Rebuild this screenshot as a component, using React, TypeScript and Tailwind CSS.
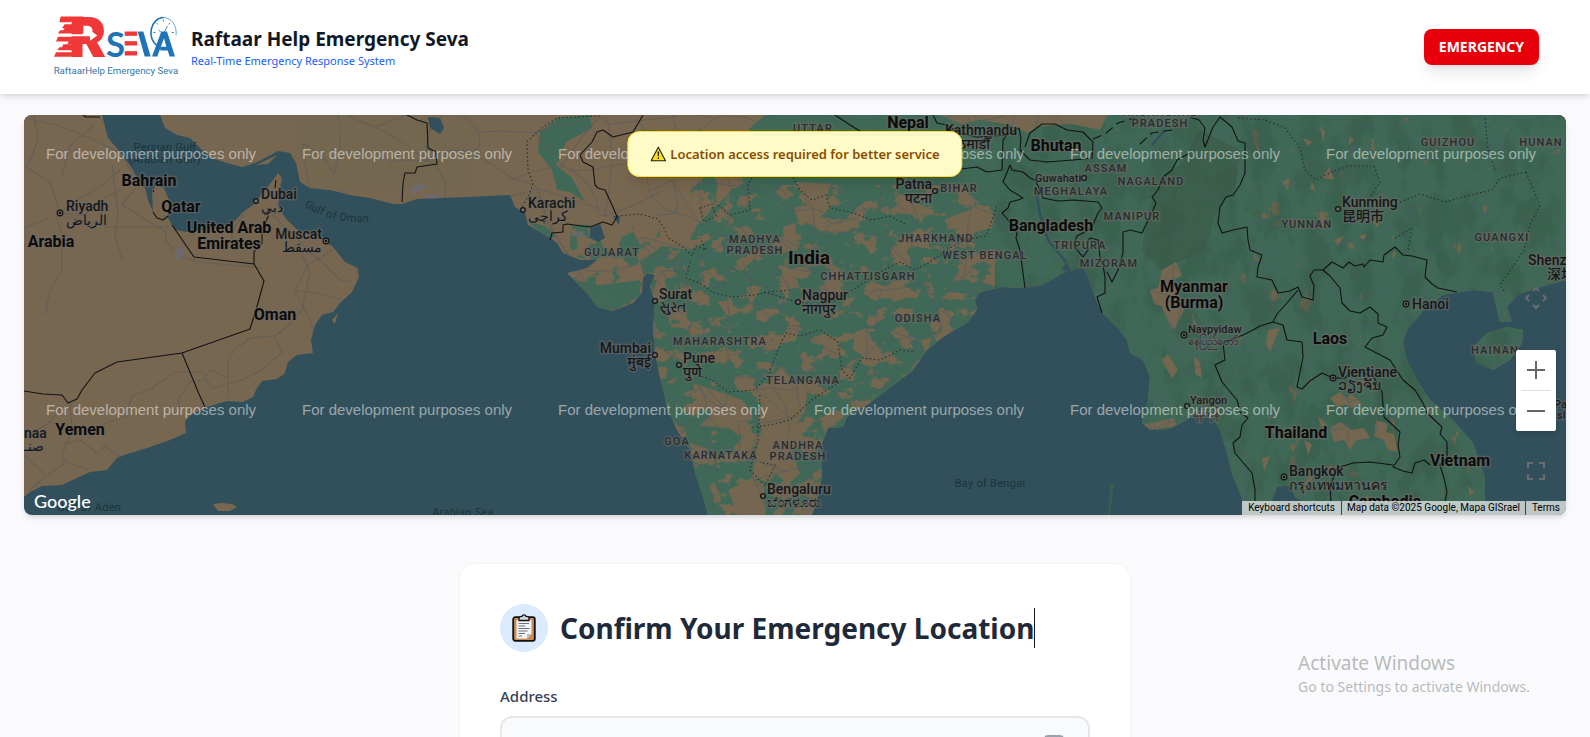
import { useState } from "react";

const LAND =
  "M24 115H102L108 138L120 152L133 170L137 178L145 188L148 200L153 212L152 190L157 185L164 188L169 200L168 218L175 230L187 232L220 227L233 223L243 212L253 205L267 188L273 180L278 173L282 178L280 188L278 207L287 220L300 232L320 238L333 247L345 262L358 268L359 277L352 292L340 303L333 312L322 315L315 325L311 340L313 353L297 355L288 362L285 373L277 379L262 381L256 390L253 397L243 402L227 401L207 407L190 415L185 422L186 433L170 440L147 448L127 454L117 458L107 470L90 472L77 478L62 485L42 486L30 492L24 497Z" +
  "M160 115L165 128L177 135L190 138L200 148L212 158L227 163L242 167L255 163L267 157L278 151L290 153L296 163L300 182L310 188L330 190L350 195L370 198L393 204L402 204L417 199L440 198L467 197L510 195L515 207L525 213L528 225L550 238L557 243L563 253L580 260L597 260L587 268L567 273L577 283L587 293L597 307L613 311L633 303L642 293L643 278L647 273L655 275L650 287L655 302L653 327L655 353L660 377L667 407L677 430L690 450L695 473L703 497L708 515H812L818 497L822 477V443L828 428L843 427L847 417L870 403L890 388L913 370L927 350L943 337L967 323L977 310L975 300L980 292L1003 287L1023 288L1043 285L1063 273L1073 270L1083 267L1088 277L1095 297L1102 313L1117 327L1127 340L1130 353L1143 360L1150 377L1148 400L1142 423L1150 430L1170 429L1190 418L1212 417L1220 430L1227 453L1233 477L1240 493L1248 515H1275L1272 500L1277 487L1290 485L1295 497L1303 502L1312 515H1480L1485 500V477L1473 443L1453 420L1430 400L1417 380L1407 360L1403 343L1407 330L1427 307L1443 295L1473 290L1493 292L1497 310L1500 322L1512 322L1507 307L1517 295L1537 288L1566 280V115Z" +
  "M1473 347L1487 333L1507 327L1523 330L1522 343L1510 360L1493 370L1477 363Z" +
  "M213 504L222 503L232 504L237 507L230 511L218 511Z M332 320L338 313L335 324Z M256 165L277 155L268 164Z";

const GREEN =
  "M765 115L750 128L745 155L748 180L722 200L700 222L712 238L690 250L662 246L640 262L648 290L650 515H1566V115Z" +
  "M558 118L590 115L592 128L566 142L556 165L572 178L585 202L570 192L557 190L552 170L538 152L540 132Z" +
  "M528 222L545 226L556 236L550 240Z M577 283L600 285L625 282L640 280L640 296L613 311L597 307Z";

const BROWN = [
  "M940 115H1107L1100 130L1072 124L1040 126L1028 133L1010 125L980 120L960 124Z",
  "M693 383L720 392L742 400L752 412L742 436L728 428L700 426L712 412L697 402Z",
  "M766 385L782 366L792 380L808 384L805 412L796 424L806 440L792 452L800 474L788 484L776 474L768 482L752 478L756 450L762 430L758 418Z",
  "M728 490L752 478L764 484L766 515H738Z",
  "M796 182L830 184L826 202L808 206Z M794 208L838 198L822 216L800 226Z",
  "M1162 270L1176 262L1182 276L1170 280L1178 292L1184 310L1174 330L1168 322L1162 306L1154 304L1150 290L1158 288Z M1162 360L1168 354L1178 370L1172 378L1166 368Z M1194 356L1200 362L1202 378L1195 374Z M1192 312L1197 326L1193 324Z",
  "M955 215L980 206L986 212L994 215L992 228L976 232L968 238L958 228L946 230Z",
  "M855 332L866 328L872 340L880 350L864 356L853 350Z M920 340L932 338L926 352Z M640 275L650 272L652 290L644 288Z",
  "M1268 330L1280 328L1274 342L1270 352L1266 344Z M1142 425L1160 421L1174 418L1176 426L1150 430Z",
  "M1330 398L1340 392L1346 398L1352 394L1362 404L1352 408L1344 404L1338 408Z M1330 428L1340 422L1352 430L1364 428L1370 438L1356 440L1350 450L1344 440L1334 442Z M1376 420L1388 424L1386 432L1394 434L1398 452L1388 450L1384 440L1374 436Z M1318 416L1326 424L1322 430Z M1262 458L1270 456L1264 472Z M1304 440L1312 444L1308 456Z M1468 486L1474 492L1470 496Z",
  "M1303 138L1312 142L1308 146Z M1320 126L1325 132L1323 142Z M1330 166L1334 180L1322 178Z M1282 182L1290 178L1288 190Z M1312 182L1316 192L1310 188Z M1358 236L1366 234L1364 240Z M1334 240L1344 236L1338 246Z M1350 136L1354 140L1348 146Z",
];

const BORDERS = [
  "M172 225L194 257L254 264L264 281L256 310L250 329L182 353L117 362L95 373L82 390L77 399L68 403L62 395L43 394L24 391",
  "M182 353L199 394L205 407 M254 264V252L262 243V230L268 217V208 M153 212L157 218L163 220L168 216 M276 180L275 188 M83 115L86 117H100 M154 190L153 192",
  "M402 202L403 183L405 173H415L417 167L437 164L436 152L428 148L427 123L417 120L407 115",
  "M643 115L633 132L613 137L603 130L597 132L592 142L580 155L583 162L593 167L595 185L598 188L605 190L613 207L617 217L612 225L603 222L590 227L567 224L563 225V232L552 233L550 240",
  "M835 115L847 123L863 133L885 150L910 160L935 168L961 169L977 167L987 172L1002 170L1003 140L1007 135 M933 115L937 123L947 125L958 133L977 137L1007 135L1015 130L1019 128L1021 138L1020 150L1030 160L1047 162L1073 160L1092 158L1093 142L1083 132L1067 130L1055 124H1042L1030 133L1025 147",
  "M1010 165L1003 182L1010 190L1023 198L1018 200L1010 202L1008 208L1002 213L1010 222L1017 233L1016 238L1020 250L1023 273L1025 288 M1010 165L1012 170L1023 172L1030 178L1035 180L1040 190L1043 198L1058 201L1073 200L1098 202L1102 208L1098 213L1095 220L1092 228L1077 236L1074 244L1077 250L1083 257L1088 250L1087 242L1090 238L1098 240L1100 257L1103 265L1105 277V293L1097 297L1102 313",
  "M1190 153L1177 160L1172 170L1163 177L1158 190L1152 197L1156 203L1153 210L1142 233L1130 230L1123 232V253L1118 270L1112 282L1107 272",
  "M1190 117L1199 120L1205 128L1203 140L1205 147L1213 127L1220 117L1232 127L1238 141L1245 143V173L1240 185L1233 195L1226 197L1220 207L1218 223L1222 233L1233 230L1247 227L1248 240L1250 250L1262 255L1258 267L1257 277L1272 280L1278 293L1290 291L1298 287L1302 297L1313 300L1314 286L1310 276L1314 270L1323 270L1332 262L1343 268L1349 262L1355 266L1363 264L1364 267L1370 260L1383 262L1384 255L1395 247L1403 255L1412 256L1427 260L1425 277L1432 284L1438 288L1457 292",
  "M1323 270L1330 276L1340 288L1342 303L1350 311L1360 313L1370 307L1378 314V323L1387 327L1383 335L1372 338L1365 347L1390 360L1403 380L1415 390L1423 403L1427 413L1442 427L1440 434L1447 442V458L1440 465L1444 478L1447 492L1445 502",
  "M1298 290L1287 303L1277 314L1273 322L1260 326L1253 330L1243 335L1223 343L1225 360L1215 365L1222 382L1237 400L1240 412L1248 418L1242 425L1240 437L1233 443L1235 453L1252 473L1255 490V502",
  "M1273 322L1283 325L1287 340L1302 342L1303 357L1297 387L1302 389L1310 381L1322 373L1333 378L1345 378L1353 370L1373 376L1382 392L1384 417L1400 432L1398 445L1400 457L1393 467L1403 471L1412 473L1415 463L1424 460L1430 465 M1393 465L1370 462L1353 463L1337 468L1330 487L1331 502",
];

const DOTTED = [
  "M600 116L575 117L557 118L545 126L537 132L527 142L528 170L533 183L530 193L522 207",
  "M617 216L640 214L658 219L664 228L668 238L682 246L692 256L696 246L706 250L700 238 M690 262L686 278L700 283L712 292L730 297L755 295L768 292L790 290",
  "M700 208L712 204L716 216L704 222L700 208 M718 205L730 215L750 210L748 184L758 170L770 165L790 172L800 190L812 200L826 195L830 208L850 212L872 220L890 216L905 224",
  "M764 292L790 300L815 305L838 300L860 285L880 272L900 262L915 270L930 262L950 248L965 240L986 236L994 215L996 205",
  "M770 370L780 345L786 333L800 336L820 330L838 342L842 370L850 378L862 358L880 360L900 350L915 352 M770 372L755 390L728 392L712 380L690 372 M752 427L770 425L790 420L812 400L842 380 M760 395L758 440L750 470L765 486L775 465L760 462",
  "M1238 118L1265 120L1285 128L1300 148L1305 170L1316 180L1336 170L1350 166L1374 166L1380 182L1370 198 M1400 202L1420 194L1445 202L1470 195L1492 190L1500 178L1526 172 M1395 238L1412 228L1408 250 M1485 118L1488 150L1495 170 M1526 172L1540 205L1530 225L1524 250L1500 285L1505 292",
];

type Kind = "country" | "india" | "city" | "small" | "state" | "sea";
type Label = [kind: Kind, x: number, y: number, text: string, anchor?: "start" | "end"];

const LABELS: Label[] = [
  ["sea", 165, 151, "Persian Gulf"],
  ["sea", 165, 163, "(Arabian Gulf)"],
  ["sea", 89, 511, "Gulf of Aden"],
  ["sea", 463, 516, "Arabian Sea"],
  ["sea", 990, 487, "Bay of Bengal"],
  ["country", 149, 186, "Bahrain"],
  ["country", 181, 212, "Qatar"],
  ["country", 229, 233, "United Arab"],
  ["country", 229, 249, "Emirates"],
  ["country", 51, 247, "Arabia"],
  ["country", 275, 320, "Oman"],
  ["country", 80, 435, "Yemen"],
  ["country", 908, 128, "Nepal"],
  ["country", 1056, 151, "Bhutan"],
  ["country", 1051, 231, "Bangladesh"],
  ["country", 1194, 292, "Myanmar"],
  ["country", 1194, 308, "(Burma)"],
  ["country", 1330, 344, "Laos"],
  ["country", 1296, 438, "Thailand"],
  ["country", 1460, 466, "Vietnam"],
  ["country", 1385, 507, "Cambodia"],
  ["india", 809, 264, "India"],
  ["city", 66, 211, "Riyadh", "start"],
  ["city", 66, 225, "الرياض", "end"],
  ["city", 261, 199, "Dubai", "start"],
  ["city", 261, 212, "دبي", "end"],
  ["city", 322, 239, "Muscat", "end"],
  ["city", 322, 252, "مسقط", "start"],
  ["city", 24, 438, "naa", "start"],
  ["city", 24, 451, "صنـ", "end"],
  ["city", 528, 208, "Karachi", "start"],
  ["city", 528, 221, "کراچی", "end"],
  ["city", 659, 299, "Surat", "start"],
  ["city", 659, 312, "સુરત", "start"],
  ["city", 802, 300, "Nagpur", "start"],
  ["city", 802, 314, "नागपुर", "start"],
  ["city", 651, 353, "Mumbai", "end"],
  ["city", 651, 367, "मुंबई", "end"],
  ["city", 683, 363, "Pune", "start"],
  ["city", 683, 377, "पुणे", "start"],
  ["city", 767, 494, "Bengaluru", "start"],
  ["city", 767, 507, "ಬೆಂಗಳೂರು", "start"],
  ["city", 1017, 135, "Kathmandu", "end"],
  ["city", 990, 149, "काठमाडौँ", "end"],
  ["city", 932, 189, "Patna", "end"],
  ["city", 932, 203, "पटना", "end"],
  ["city", 1342, 207, "Kunming", "start"],
  ["city", 1342, 221, "昆明市", "start"],
  ["city", 1528, 265, "Shenzhen", "start"],
  ["city", 1547, 279, "深圳市", "start"],
  ["city", 1412, 309, "Hanoi", "start"],
  ["city", 1338, 377, "Vientiane", "start"],
  ["city", 1338, 390, "ວຽງຈັນ", "start"],
  ["city", 1289, 476, "Bangkok", "start"],
  ["city", 1289, 490, "กรุงเทพมหานคร", "start"],
  ["small", 1035, 182, "Guwahati", "start"],
  ["small", 1188, 333, "Naypyidaw", "start"],
  ["small", 1188, 345, "နေပြည်တော်", "start"],
  ["small", 1190, 404, "Yangon", "start"],
  ["small", 1192, 417, "ရန်ကုန်", "start"],
  ["small", 1554, 408, "Para", "start"],
  ["small", 1554, 419, "Islan", "start"],
  ["state", 612, 256, "GUJARAT"],
  ["state", 755, 243, "MADHYA"],
  ["state", 755, 254, "PRADESH"],
  ["state", 813, 132, "UTTAR"],
  ["state", 959, 192, "BIHAR"],
  ["state", 1106, 172, "ASSAM"],
  ["state", 1151, 185, "NAGALAND"],
  ["state", 1071, 195, "MEGHALAYA"],
  ["state", 1132, 220, "MANIPUR"],
  ["state", 1080, 249, "TRIPURA"],
  ["state", 1109, 267, "MIZORAM"],
  ["state", 936, 242, "JHARKHAND"],
  ["state", 985, 259, "WEST BENGAL"],
  ["state", 868, 280, "CHHATTISGARH"],
  ["state", 918, 322, "ODISHA"],
  ["state", 1160, 116, "ARUNACHAL"],
  ["state", 1160, 127, "PRADESH"],
  ["state", 720, 345, "MAHARASHTRA"],
  ["state", 803, 384, "TELANGANA"],
  ["state", 677, 445, "GOA"],
  ["state", 721, 459, "KARNATAKA"],
  ["state", 798, 449, "ANDHRA"],
  ["state", 798, 460, "PRADESH"],
  ["state", 1448, 146, "GUIZHOU"],
  ["state", 1541, 146, "HUNAN"],
  ["state", 1307, 228, "YUNNAN"],
  ["state", 1502, 241, "GUANGXI"],
  ["state", 1495, 354, "HAINAN"],
];

const LABEL_CLASS: Record<Kind, string> = {
  country: "text-[16px] font-bold fill-[#0b0b0c]",
  india: "text-[19px] font-bold fill-[#0b0b0c]",
  city: "text-[14px] font-medium fill-[#161719]",
  small: "text-[11px] font-medium fill-[#1b1c1e]",
  state: "text-[11px] font-medium tracking-widest fill-[#2a2c2f]",
  sea: "text-[11px] tracking-wide fill-[#1b333b]",
};

const RTL = /[\u0600-\u06ff]/;

const CAPITALS = [[60, 213], [326, 241], [1406, 304], [1333, 378], [1284, 477], [1184, 335]];
const CITIES = [[256, 201], [523, 210], [655, 301], [798, 302], [655, 355], [679, 365], [763, 496], [935, 191], [1338, 209], [1084, 178], [1187, 406]];

const WATERMARKS = [159, 415].flatMap((y) => [46, 302, 558, 814, 1070, 1326].map((x) => [x, y]));

// Small seeded generator so the road net is the same on every render
function buildRoads(x0: number, x1: number, cell: number, seed: number) {
  let s = seed;
  const rnd = () => {
    s = (s * 16807) % 2147483647;
    return s / 2147483647;
  };
  const cols = Math.ceil((x1 - x0) / cell);
  const rows = Math.ceil(400 / cell) + 1;
  const pts = Array.from({ length: rows }, (_, r) =>
    Array.from({ length: cols + 1 }, (_, c) => [x0 + (c + rnd() * 0.9 - 0.4) * cell, 110 + (r + rnd() * 0.9 - 0.4) * cell])
  );
  let d = "";
  const link = (a: number[], b: number[]) => {
    const mx = (a[0] + b[0]) / 2 + (rnd() - 0.5) * cell * 0.5;
    const my = (a[1] + b[1]) / 2 + (rnd() - 0.5) * cell * 0.5;
    d += `M${a[0].toFixed(0)} ${a[1].toFixed(0)}Q${mx.toFixed(0)} ${my.toFixed(0)} ${b[0].toFixed(0)} ${b[1].toFixed(0)}`;
  };
  for (let r = 0; r < rows; r++) {
    for (let c = 0; c <= cols; c++) {
      if (c < cols && rnd() < 0.75) link(pts[r][c], pts[r][c + 1]);
      if (r < rows - 1 && rnd() < 0.7) link(pts[r][c], pts[r + 1][c]);
      if (r < rows - 1 && c < cols && rnd() < 0.25) link(pts[r][c], pts[r + 1][c + 1]);
    }
  }
  return d;
}

const PLAIN_ROADS = buildRoads(300, 660, 46, 77);
const DENSE_ROADS = buildRoads(650, 1570, 26, 4242);

const GULF_ROADS =
  "M24 118L60 126L90 138L118 152L132 172L136 188L122 205L140 216L166 232V240L178 256L200 262L240 266L262 268 M24 165L50 182L60 213L80 198L98 188L120 170 M60 213L84 216L100 200L122 190 M62 216L110 227H170 M56 216L62 236V270L50 290L45 315 M112 165L118 215L115 235L122 260 M34 115L38 140L28 165 M95 125L70 145L62 175 M24 228L50 218 M244 214L232 232V250 M270 212L290 232L312 254L322 262L340 280L352 282 M300 250L310 272L302 310L286 328L275 336 M275 336L250 338L234 350L228 362V398 M275 336L282 352L262 370L242 380L212 388L204 376L212 370L226 378 M205 380L190 382L178 400L180 410 M204 372L175 372L152 388L132 396L126 416L104 424 M70 402L72 430L62 455L66 462L44 478L30 490 M24 455L44 474 M64 444L80 440L98 454L104 446L122 458 M24 438L50 422L60 408 M66 462L88 470";

function MapTerrain() {
  return (
    <>
      <defs>
        <clipPath id="land"><path d={LAND} /></clipPath>
        <clipPath id="green"><path d={GREEN} /></clipPath>
        <filter id="fields" x="0" y="0" width="1" height="1" colorInterpolationFilters="sRGB">
          <feTurbulence type="fractalNoise" baseFrequency="0.045 0.06" numOctaves="5" seed="8" />
          <feColorMatrix values="0 0 0 0 0.46  0 0 0 0 0.4  0 0 0 0 0.31  20 0 0 0 -10.7" />
        </filter>
        <filter id="fewFields" x="0" y="0" width="1" height="1" colorInterpolationFilters="sRGB">
          <feTurbulence type="fractalNoise" baseFrequency="0.06 0.035" numOctaves="4" seed="21" />
          <feColorMatrix values="0 0 0 0 0.44  0 0 0 0 0.4  0 0 0 0 0.3  18 0 0 0 -13" />
        </filter>
        <filter id="groves" x="0" y="0" width="1" height="1" colorInterpolationFilters="sRGB">
          <feTurbulence type="fractalNoise" baseFrequency="0.05" numOctaves="4" seed="5" />
          <feColorMatrix values="0 0 0 0 0.25  0 0 0 0 0.41  0 0 0 0 0.34  20 0 0 0 -11" />
        </filter>
        <filter id="forest" x="0" y="0" width="1" height="1" colorInterpolationFilters="sRGB">
          <feTurbulence type="fractalNoise" baseFrequency="0.04 0.025" numOctaves="5" seed="13" />
          <feColorMatrix values="0 0 0 0 0.21  0 0 0 0 0.33  0 0 0 0 0.27  5 0 0 0 -2.3" />
        </filter>
      </defs>
      <rect x="24" y="115" width="1542" height="400" fill="#31505b" />
      <g clipPath="url(#land)">
        <rect x="24" y="115" width="1542" height="400" fill="#786750" />
        <path d="M290 115H480L470 190H310Z" fill="#6f6850" opacity="0.6" />
        <path d={GREEN} fill="#3f6956" />
        <g clipPath="url(#green)">
          <rect x="650" y="185" width="345" height="330" filter="url(#fields)" />
          <rect x="1230" y="115" width="336" height="400" filter="url(#fewFields)" />
          <rect x="995" y="115" width="571" height="400" filter="url(#forest)" opacity="0.4" />
        </g>
        <rect x="570" y="225" width="90" height="90" filter="url(#groves)" />
        <rect x="690" y="150" width="90" height="90" filter="url(#groves)" />
        <path d="M1148 210L1160 180L1180 165L1200 130L1240 150L1236 185L1215 215L1206 250L1160 270L1142 250Z" fill="#385843" opacity="0.55" />
        {BROWN.map((d) => <path key={d} d={d} fill="#75664f" />)}
        <path d={GULF_ROADS} fill="none" stroke="#5f5c58" strokeWidth="1.2" opacity="0.8" strokeLinejoin="round" />
        <path d={PLAIN_ROADS} fill="none" stroke="#5d5c5c" strokeWidth="1.1" opacity="0.75" />
        <path d={DENSE_ROADS} fill="none" stroke="#4c5b67" strokeWidth="1" opacity="0.6" />
        <path d="M428 117L440 118L444 128L440 134L430 128Z M590 228L600 224L605 238L598 242L590 238Z M613 216L620 216L619 225Z M1066 262L1073 274L1062 270Z" fill="#31505b" />
        <path d="M410 188L424 182L427 188L412 194Z M425 195L438 194L440 199L428 200Z M572 232L584 231L583 237L571 236Z M175 250L182 245L184 256L175 262Z" fill="#6b6c72" opacity="0.8" />
        <path d="M1037 195L1040 215L1048 240L1066 262 M1152 145L1165 130" fill="none" stroke="#31505b" strokeWidth="2.5" />
      </g>
      <path d="M1110 484L1114 483L1110 515H1108Z" fill="#3b5c50" />
      {BORDERS.map((d) => <path key={d} d={d} fill="none" stroke="#111314" strokeWidth="1.1" strokeLinejoin="round" />)}
      {DOTTED.map((d) => <path key={d} d={d} fill="none" stroke="#24302d" strokeWidth="1.1" strokeDasharray="1.5 2.5" />)}
      <path d="M1093 139L1105 134L1118 123L1135 118 M1140 144L1152 133L1172 130" fill="none" stroke="#111314" strokeWidth="1.2" strokeDasharray="9 5" />
    </>
  );
}

function MapCanvas() {
  return (
    <svg className="block h-full w-full" viewBox="24 115 1542 400" preserveAspectRatio="xMidYMid slice" role="img" aria-label="Map">
      <MapTerrain />
      <g className="font-[Roboto,'Noto_Sans','Noto_Sans_CJK_SC',sans-serif]" stroke="#6d6a66" strokeOpacity="0.55" strokeWidth="3" strokeLinejoin="round" paintOrder="stroke">
        {LABELS.map(([kind, x, y, text, anchor]) => (
          <text
            key={`${text}-${x}-${y}`}
            x={x}
            y={y}
            direction={RTL.test(text) ? "rtl" : undefined}
            textAnchor={anchor ?? "middle"}
            className={LABEL_CLASS[kind]}
            strokeWidth={kind === "sea" ? 0 : undefined}
          >
            {text}
          </text>
        ))}
      </g>
      <path id="gulf-of-oman" d="M304 206Q334 226 380 221" fill="none" />
      <text className="font-[Roboto,sans-serif] text-[11px] tracking-wide fill-[#1b333b]">
        <textPath href="#gulf-of-oman">Gulf of Oman</textPath>
      </text>
      {CITIES.map(([x, y]) => <circle key={`${x}-${y}`} cx={x} cy={y} r="2.4" fill="#6d6a66" stroke="#111314" strokeWidth="1.2" />)}
      {CAPITALS.map(([x, y]) => (
        <g key={`${x}-${y}`}>
          <circle cx={x} cy={y} r="2.9" fill="#6d6a66" stroke="#111314" strokeWidth="1.1" />
          <circle cx={x} cy={y} r="1.3" fill="#111314" />
        </g>
      ))}
      <g className="font-['Liberation_Sans',Arial,sans-serif] text-[15px]" fill="#fff" fillOpacity="0.5">
        {WATERMARKS.map(([x, y]) => <text key={`${x}-${y}`} x={x} y={y}>For development purposes only</text>)}
      </g>
    </svg>
  );
}

function Logo() {
  return (
    <svg className="h-16 w-32 shrink-0" viewBox="153 48 384 189" role="img" aria-label="RSEVA">
      <g fill="#ef3837">
        <text x="207" y="172" fontSize="166" fontWeight="900" fontFamily="Inter, sans-serif">R</text>
        <path d="M182 51H250V63H218L212 68H178Z" />
        <path d="M194 74H250V102H174L180 92H190L194 86H186Z" />
        <path d="M174 112H250V134H202L206 126H168Z" />
        <path d="M190 134H246V152H172L178 143H186Z" />
        <path d="M168 158H234L230 172H162Z" />
        <rect x="374" y="96" width="37" height="13" />
        <rect x="374" y="125" width="37" height="13" />
        <rect x="374" y="155" width="37" height="13" />
      </g>
      <path d="M172 104H270V92L292 108L270 124V110H172Z" fill="#fff" />
      <g fill="#1f74b8">
        <text x="318" y="171" fontSize="104" fontWeight="700" fontFamily="Lato, sans-serif">S</text>
        <path d="M413 96H430L452 171H434Z" />
        <path d="M456 171L484 96H501L525 171H509L503 153H480L484 142H499L492 116L472 171Z" />
      </g>
      <g fill="none" stroke="#1f74b8">
        <path d="M528 108A38 46 0 0 0 490 54" strokeWidth="2" />
        <path d="M490 54A38 46 0 0 0 472 140Q482 150 500 148" strokeWidth="5" />
        <path d="M490 104L502 80 M490 104L476 92 M490 60V67 M460 99H467 M515 99H522 M510 70L506 75 M470 70L474 75" strokeWidth="2.5" />
      </g>
      <text x="161" y="224" fontSize="29" fontFamily="Roboto, sans-serif" fill="#2f76ab">RaftaarHelp Emergency Seva</text>
    </svg>
  );
}

function WarningIcon() {
  return (
    <svg className="h-4 w-4 shrink-0" viewBox="0 0 16 16" aria-hidden="true">
      <path d="M8 1.2L15.2 14.8H.8Z" fill="#fde01b" stroke="#1d1d1b" strokeWidth="1.1" strokeLinejoin="round" />
      <path d="M7.2 5.5H8.8L8.5 10.6H7.5Z M7.3 11.6H8.7V13H7.3Z" fill="#1d1d1b" />
    </svg>
  );
}

function ClipboardIcon() {
  return (
    <svg className="h-7 w-6" viewBox="0 0 24 28" aria-hidden="true">
      <rect x="1.2" y="3.2" width="21.6" height="23.6" rx="2" fill="#c98d52" stroke="#111" strokeWidth="1.8" />
      <path d="M4.5 6H19.5V20L15 24.5H4.5Z" fill="#f3f4f5" />
      <path d="M19.5 20H15V24.5Z" fill="#b9bec4" />
      <path d="M7 4Q8 2 10 2.4Q10.5 .8 12 .8Q13.5 .8 14 2.4Q16 2 17 4V6.5H7Z" fill="#d4d6da" stroke="#111" strokeWidth="1.3" />
      <path d="M6.5 9.5H17M6.5 12H13M6.5 14.5H17.5M6.5 17H15.5M6.5 19.5H13M6.5 22H10" stroke="#6b7280" strokeWidth="1" />
    </svg>
  );
}

function MapControls() {
  return (
    <div className="absolute right-2.5 bottom-6 flex flex-col items-center">
      <button type="button" aria-label="Map camera controls" className="flex h-10 w-10 items-center justify-center text-[#6c6c70]">
        <svg className="h-6 w-6" viewBox="0 0 24 24" fill="none" stroke="currentColor" strokeWidth="2" aria-hidden="true">
          <path d="M9 5L12 2L15 5M9 19L12 22L15 19M5 9L2 12L5 15M19 9L22 12L19 15" />
        </svg>
      </button>
      <div className="mt-8 flex flex-col items-center rounded-xs bg-white text-[#666] shadow-md">
        <button type="button" aria-label="Zoom in" className="flex h-10 w-10 items-center justify-center">
          <svg className="h-[18px] w-[18px]" viewBox="0 0 18 18" aria-hidden="true"><path d="M8 0H10V8H18V10H10V18H8V10H0V8H8Z" fill="currentColor" /></svg>
        </button>
        <div className="h-px w-[30px] bg-[#e0e0e0]" />
        <button type="button" aria-label="Zoom out" className="flex h-10 w-10 items-center justify-center">
          <svg className="h-[18px] w-[18px]" viewBox="0 0 18 18" aria-hidden="true"><path d="M0 8H18V10H0Z" fill="currentColor" /></svg>
        </button>
      </div>
      <button type="button" aria-label="Toggle fullscreen view" className="mt-5 flex h-10 w-10 items-center justify-center text-[#6c6c70]">
        <svg className="h-[18px] w-[18px]" viewBox="0 0 18 18" fill="none" stroke="currentColor" strokeWidth="2" aria-hidden="true">
          <path d="M1 6V1H6M12 1H17V6M17 12V17H12M6 17H1V12" />
        </svg>
      </button>
    </div>
  );
}

export default function App() {
  const [address, setAddress] = useState("");

  return (
    <div className="relative flex h-screen flex-col overflow-hidden bg-[#fafafc] font-['Segoe_UI','Noto_Sans',sans-serif]">
      <header className="relative z-10 shrink-0 bg-white shadow-md">
        <div className="mx-auto flex max-w-screen-2xl items-center justify-between px-6 py-[15px]">
          <div className="flex items-center gap-3">
            <Logo />
            <div>
              <h1 className="text-[19px] leading-7 font-bold text-gray-900">Raftaar Help Emergency Seva</h1>
              <p className="text-[11px] leading-4 text-blue-600">Real-Time Emergency Response System</p>
            </div>
          </div>
          <button type="button" className="rounded-lg bg-red-600 px-[15px] py-2 text-[14px] leading-5 font-bold text-white shadow-lg">
            EMERGENCY
          </button>
        </div>
      </header>

      <main className="flex-1 px-6 pt-[21px]">
        <section className="relative h-[400px] overflow-hidden rounded-lg shadow-md">
          <MapCanvas />
          <div role="alert" className="absolute top-4 left-1/2 flex -translate-x-1/2 items-center gap-1 rounded-xl border border-yellow-300 bg-[#fffbc6] px-[22px] py-3 text-[13px] leading-5 font-semibold whitespace-nowrap text-yellow-800 shadow-lg">
            <WarningIcon />
            Location access required for better service
          </div>
          <MapControls />
          <a href="#google" className="absolute bottom-0.5 left-2.5 font-[Lato,sans-serif] text-[18px] leading-6 font-medium text-white">Google</a>
          <div className="absolute right-0 bottom-0 flex h-3.5 bg-[#d5dcda]/85 font-[Roboto,sans-serif] text-[10px] leading-[14px] text-black">
            <button type="button" className="px-1.5">Keyboard shortcuts</button>
            <span className="border-l border-gray-700 px-[5px]">Map data ©2025 Google, Mapa GISrael</span>
            <a href="#terms" className="border-l border-gray-700 px-1.5">Terms</a>
          </div>
        </section>

        <form className="mx-auto mt-12 max-w-2xl rounded-2xl border border-gray-100 bg-white p-10 shadow-xs">
          <div className="flex items-center gap-3">
            <div className="flex h-12 w-12 shrink-0 items-center justify-center rounded-full bg-blue-100">
              <ClipboardIcon />
            </div>
            <h2 className="border-r border-gray-900 text-[28px] leading-10 font-bold whitespace-nowrap text-gray-800">Confirm Your Emergency Location</h2>
          </div>
          <label htmlFor="address" className="mt-8 block text-[15px] leading-6 font-medium text-gray-700">Address</label>
          <div className="relative mt-2">
            <input
              id="address"
              type="text"
              value={address}
              onChange={(e) => setAddress(e.target.value)}
              className="h-14 w-full rounded-xl border-2 border-gray-200 bg-gray-50 px-4 pr-12"
            />
            <svg className="absolute top-[18px] right-[26px] h-5 w-5 text-gray-400" viewBox="0 0 20 20" fill="none" stroke="currentColor" strokeWidth="2" aria-hidden="true">
              <rect x="1" y="2" width="18" height="16" rx="3" />
            </svg>
          </div>
        </form>
      </main>

      <div className="pointer-events-none absolute right-[60px] bottom-10 text-[#b9babd]">
        <p className="text-[19px] leading-7">Activate Windows</p>
        <p className="text-[14px] leading-5">Go to Settings to activate Windows.</p>
      </div>
    </div>
  );
}
